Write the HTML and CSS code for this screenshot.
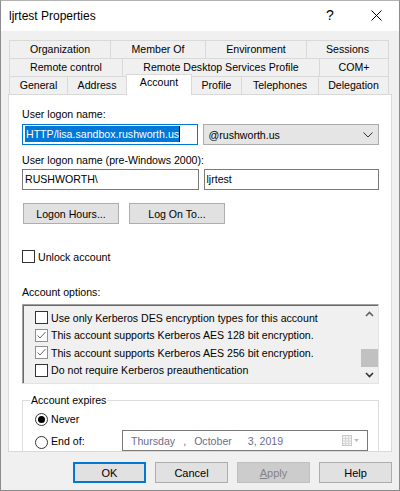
FILE: index.html
```html
<!DOCTYPE html>
<html lang="en">
<head>
    <meta charset="UTF-8">
    <title>ljrtest Properties</title>
    <link rel="stylesheet" href="styles.css">
</head>
<body>
    <div class="window">
        <div class="titlebar">
            <span class="title">ljrtest Properties</span>
            <span class="cap-btn help-btn">?</span>
            <span class="cap-btn close-btn">
                <svg width="11" height="11" viewBox="0 0 11 11"><path d="M0.5 0.5 L10.5 10.5 M10.5 0.5 L0.5 10.5" stroke="#000" stroke-width="1"/></svg>
            </span>
        </div>

        <div class="client">
            <div class="tabs">
                <div class="tab-row">
                    <div class="tab" style="width:102px">Organization</div>
                    <div class="tab" style="width:96px">Member Of</div>
                    <div class="tab" style="width:102px">Environment</div>
                    <div class="tab" style="width:83px">Sessions</div>
                </div>
                <div class="tab-row">
                    <div class="tab" style="width:114px">Remote control</div>
                    <div class="tab" style="width:198px">Remote Desktop Services Profile</div>
                    <div class="tab" style="width:70px">COM+</div>
                </div>
                <div class="tab-row">
                    <div class="tab" style="width:59px">General</div>
                    <div class="tab" style="width:60px">Address</div>
                    <div class="tab active" style="width:66px">Account</div>
                    <div class="tab" style="width:51px">Profile</div>
                    <div class="tab" style="width:78px">Telephones</div>
                    <div class="tab" style="width:71px">Delegation</div>
                </div>
            </div>

            <div class="panel">
                <div class="label">User logon name:</div>
                <div class="field-row first">
                    <div class="textbox focused"><span class="sel">HTTP/lisa.sandbox.rushworth.us</span></div>
                    <div class="combo">
                        <span>@rushworth.us</span>
                        <svg width="10" height="6" viewBox="0 0 10 6"><path d="M0.5 0.5 L5 5 L9.5 0.5" fill="none" stroke="#333" stroke-width="1"/></svg>
                    </div>
                </div>

                <div class="label second">User logon name (pre-Windows 2000):</div>
                <div class="field-row">
                    <div class="textbox">RUSHWORTH\</div>
                    <div class="textbox">ljrtest</div>
                </div>

                <div class="btn-row">
                    <button class="btn">Logon Hours...</button>
                    <button class="btn">Log On To...</button>
                </div>

                <div class="check-row unlock">
                    <span class="checkbox"></span>
                    <span>Unlock account</span>
                </div>

                <div class="label options-label">Account options:</div>
                <div class="listbox">
                    <div class="list-items">
                        <div class="list-item"><span class="checkbox"></span>Use only Kerberos DES encryption types for this account</div>
                        <div class="list-item"><span class="checkbox checked"><svg width="11" height="11" viewBox="0 0 11 11"><path d="M1.5 5.5 L4 8 L9.5 2" fill="none" stroke="#6a6a6a" stroke-width="1"/></svg></span>This account supports Kerberos AES 128 bit encryption.</div>
                        <div class="list-item"><span class="checkbox checked"><svg width="11" height="11" viewBox="0 0 11 11"><path d="M1.5 5.5 L4 8 L9.5 2" fill="none" stroke="#6a6a6a" stroke-width="1"/></svg></span>This account supports Kerberos AES 256 bit encryption.</div>
                        <div class="list-item"><span class="checkbox"></span>Do not require Kerberos preauthentication</div>
                    </div>
                    <div class="scrollbar">
                        <svg class="arrow" width="9" height="6" viewBox="0 0 9 6"><path d="M1 5 L4.5 1.5 L8 5" fill="none" stroke="#606060" stroke-width="1.6"/></svg>
                        <div class="track"><div class="thumb"></div></div>
                        <svg class="arrow" width="9" height="6" viewBox="0 0 9 6"><path d="M1 1 L4.5 4.5 L8 1" fill="none" stroke="#333" stroke-width="1.6"/></svg>
                    </div>
                </div>

                <fieldset class="group">
                    <legend>Account expires</legend>
                    <div class="radio-row">
                        <span class="radio on"></span>
                        <span>Never</span>
                    </div>
                    <div class="radio-row endof">
                        <span class="radio"></span>
                        <span class="radio-label">End of:</span>
                        <div class="datepicker">
                            <span class="d-day">Thursday</span>
                            <span class="d-comma">,</span>
                            <span class="d-month">October</span>
                            <span class="d-date">3, 2019</span>
                            <span class="d-icon">
                                <svg width="18" height="11" viewBox="0 0 18 11">
                                    <rect x="0.5" y="0.5" width="9" height="10" fill="#f4f4f4" stroke="#c8c8c8"/>
                                    <path d="M0.5 3.5 H9.5 M0.5 6 H9.5 M0.5 8.5 H9.5 M3.5 0.5 V10.5 M6.5 0.5 V10.5" stroke="#d6d6d6" stroke-width="1"/>
                                    <path d="M12 4 L17 4 L14.5 7 Z" fill="#bdbdbd"/>
                                </svg>
                            </span>
                        </div>
                    </div>
                </fieldset>
            </div>

            <div class="footer">
                <button class="btn dlg-btn default">OK</button>
                <button class="btn dlg-btn">Cancel</button>
                <button class="btn dlg-btn disabled"><u>A</u>pply</button>
                <button class="btn dlg-btn">Help</button>
            </div>
        </div>
    </div>
</body>
</html>
```

FILE: styles.css
```css
/* dialog basics */
body {
    margin: 0;
    font-family: "Liberation Sans", Arial, sans-serif;
    font-size: 10.6px;
    color: #000;
    background: #fff;
}

.window {
    width: 400px;
    height: 491px;
    box-sizing: border-box;
    border: 1px solid #8c8c8c;
    border-top-color: #b4b4b4;
    background: #f0f0f0;
    overflow: hidden;
}

.titlebar {
    height: 30px;
    background: #fff;
    display: flex;
    align-items: center;
}

.title {
    flex-grow: 1;
    padding-left: 8px;
    font-size: 12px;
    padding-bottom: 1px;
}

.cap-btn {
    width: 46px;
    height: 30px;
    display: flex;
    align-items: center;
    justify-content: center;
}

.help-btn {
    font-size: 14px;
    padding-bottom: 2px;
    box-sizing: border-box;
}

.close-btn svg {
    display: block;
    margin-bottom: 1px;
}

.client {
    padding-top: 9px;
}

/* tabs */
.tabs {
    margin-left: 8px;
}

.tab-row {
    display: flex;
    height: 18px;
    align-items: flex-start;
}

.tab {
    box-sizing: border-box;
    height: 18px;
    border: 1px solid #d9d9d9;
    border-bottom: none;
    margin-right: -1px;
    background: #f0f0f0;
    text-align: center;
    line-height: 17px;
    white-space: nowrap;
}

.tab.active {
    position: relative;
    z-index: 2;
    height: 21px;
    margin-top: -2px;
    background: #fff;
    line-height: 15px;
}

/* page */
.panel {
    position: relative;
    z-index: 1;
    margin-left: 7px;
    width: 384px;
    height: 358px;
    box-sizing: border-box;
    border: 1px solid #d9d9d9;
    background: #fff;
    padding: 13px 12px 0 13px;
    overflow: hidden;
}

.label {
    line-height: 13px;
}

.label.second {
    margin-top: 9px;
}

.field-row {
    display: flex;
    gap: 5px;
    margin-top: 2px;
}

.field-row.first {
    margin-top: 3px;
}

.textbox {
    box-sizing: border-box;
    width: 177px;
    height: 21px;
    border: 1px solid #7a7a7a;
    background: #fff;
    padding-left: 2px;
    line-height: 19px;
    white-space: nowrap;
    overflow: hidden;
}

.field-row .textbox + .textbox {
    width: 176px;
}

.textbox.focused {
    border-color: #0078d7;
}

.sel {
    background: #0078d7;
    color: #fff;
    padding: 2px 0 2px 1px;
    border-right: 1px solid #000;
}

.combo {
    box-sizing: border-box;
    width: 176px;
    height: 21px;
    border: 1px solid #acacac;
    background: #e5e5e5;
    display: flex;
    align-items: center;
    justify-content: space-between;
    padding: 0 5px 0 4px;
}

.btn {
    box-sizing: border-box;
    height: 21px;
    border: 1px solid #adadad;
    background: #e1e1e1;
    font-family: inherit;
    font-size: inherit;
    color: #000;
    padding: 0;
}

.btn-row {
    display: flex;
    gap: 10px;
    margin-top: 13px;
    margin-left: 1px;
}

.btn-row .btn {
    width: 96px;
}

.checkbox {
    box-sizing: border-box;
    width: 13px;
    height: 13px;
    border: 1px solid #333;
    background: #fff;
    flex-shrink: 0;
    display: inline-flex;
    align-items: center;
    justify-content: center;
}

.checkbox.checked {
    border-color: #8f8f8f;
}

.check-row {
    display: flex;
    align-items: center;
    gap: 3px;
    height: 13px;
}

.unlock {
    margin-top: 26px;
}

.options-label {
    margin-top: 23px;
}

/* account options list */
.listbox {
    box-sizing: border-box;
    margin-top: 5px;
    width: 357px;
    height: 80px;
    border-top: 1px solid #a0a0a0;
    border-left: 1px solid #a0a0a0;
    border-right: 1px solid #e3e3e3;
    border-bottom: 1px solid #e3e3e3;
    box-shadow: inset 1px 1px 0 #696969;
    background: #f0f0f0;
    display: flex;
}

.list-items {
    flex-grow: 1;
    padding: 4px 0 0 12px;
}

.list-item {
    display: flex;
    align-items: center;
    gap: 3px;
    height: 18px;
    margin-top: -0.5px;
    white-space: nowrap;
}

.scrollbar {
    width: 17px;
    margin-top: 1px;
    display: flex;
    flex-direction: column;
    align-items: center;
    background: #f0f0f0;
}

.scrollbar .arrow {
    display: block;
    margin: 5px 0 5px;
}

.track {
    flex-grow: 1;
    width: 17px;
    position: relative;
}

.thumb {
    margin-top: 27px;
    height: 18px;
    background: #c1c1c1;
}

/* account expires group */
.group {
    margin: 10px 0 0;
    width: 357px;
    box-sizing: border-box;
    border: 1px solid #dcdcdc;
    padding: 5px 0 20px 12px;
}

.group legend {
    margin-left: -5px;
    padding: 0 1px;
    line-height: 13px;
}

.radio-row {
    display: flex;
    align-items: center;
    gap: 3px;
    height: 14px;
}

.radio {
    box-sizing: border-box;
    width: 13px;
    height: 13px;
    border: 1px solid #333;
    border-radius: 50%;
    background: #fff;
    display: inline-flex;
    align-items: center;
    justify-content: center;
}

.radio.on::after {
    content: "";
    width: 7px;
    height: 7px;
    border-radius: 50%;
    background: #000;
}

.radio-row.endof {
    height: 21px;
    margin-top: 4px;
    align-items: flex-start;
}

.endof .radio {
    margin-top: 6px;
}

.radio-label {
    width: 68px;
    margin-top: 5px;
}

.datepicker {
    box-sizing: border-box;
    width: 246px;
    height: 21px;
    border: 1px solid #7a7a7a;
    display: flex;
    align-items: center;
    color: #6d6d8a;
    padding-left: 8px;
}

.d-comma {
    margin-left: 8px;
}

.d-month {
    margin-left: 8px;
}

.d-date {
    margin-left: 16px;
}

.d-icon {
    margin-left: auto;
    margin-right: 7px;
    display: flex;
}

/* bottom buttons */
.footer {
    display: flex;
    justify-content: flex-end;
    gap: 9px;
    margin-top: 10px;
    margin-right: 7px;
}

.dlg-btn {
    width: 73px;
    height: 21px;
    font-size: 11px;
}

.dlg-btn.default {
    border: 2px solid #0078d7;
}

.dlg-btn.disabled {
    background: #cccccc;
    border-color: #bfbfbf;
    color: #838383;
}
```
